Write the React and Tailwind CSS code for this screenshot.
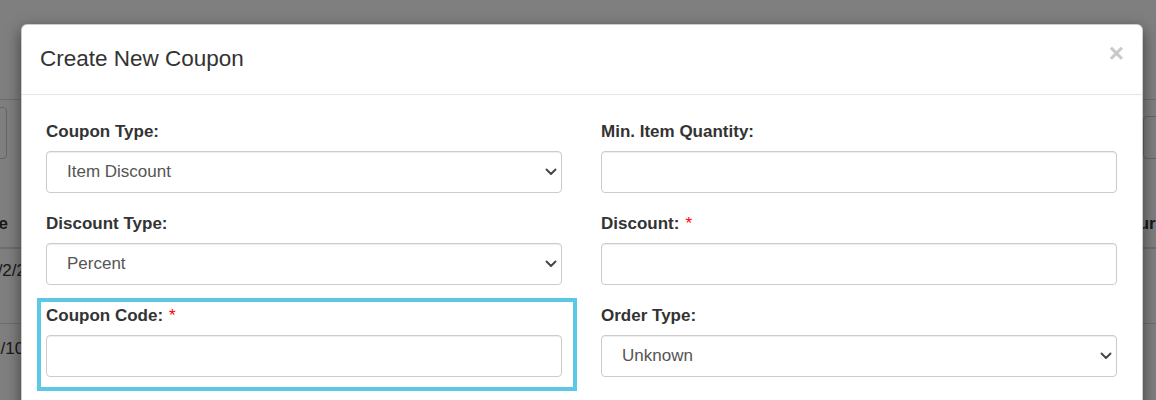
import React from 'react';

const FONT = { fontFamily: '"Liberation Sans", Arial, sans-serif' };

const Chevron = () => (
  <svg
    className="pointer-events-none absolute right-[5px] top-1/2 -translate-y-1/2"
    width="12"
    height="8"
    viewBox="0 0 12 8"
    fill="none"
  >
    <path d="M1.5 1.5 L6 6 L10.5 1.5" stroke="#444" strokeWidth="1.9" strokeLinecap="round" strokeLinejoin="round" />
  </svg>
);

const Label = ({ text, required }) => (
  <label className="block h-[22px] leading-[22px] mb-[8px] text-[17px] font-bold text-[#333]">
    {text}
    {required && <span className="ml-[6px] font-normal text-[#f00]">*</span>}
  </label>
);

const SelectField = ({ value }) => (
  <div className="relative h-[42px]">
    <select
      defaultValue={value}
      className="appearance-none w-full h-full pl-[20px] pr-8 bg-white border border-[#ccc] rounded-[4px] text-[17px] text-[#555] shadow-[inset_0_1px_1px_rgba(0,0,0,0.075)] outline-none"
    >
      <option>{value}</option>
    </select>
    <Chevron />
  </div>
);

const TextField = () => (
  <input
    type="text"
    className="block w-full h-[42px] px-3 bg-white border border-[#ccc] rounded-[4px] text-[17px] text-[#555] shadow-[inset_0_1px_1px_rgba(0,0,0,0.075)] outline-none"
  />
);

const Group = ({ label, required, children, highlight }) => (
  <div className="relative mb-[20px]">
    {highlight && (
      <div className="pointer-events-none absolute -left-[9px] -right-[15px] -top-[7px] -bottom-[14px] border-[4px] border-[#5bc8e6]" />
    )}
    <Label text={label} required={required} />
    {children}
  </div>
);

// pagina de fondo, tapada por el backdrop
const BackgroundPage = () => (
  <div className="w-full h-[400px] overflow-hidden bg-white text-[17px] text-[#333]">
    <div className="h-[100px] border-b border-[#ddd]" />
    <div className="h-[59px] flex justify-between items-end">
      <div className="-ml-[20px] w-[27px] h-[52px] border border-[#ccc] rounded-[4px]" />
      <div className="-mr-[20px] w-[33px] h-[43px] border border-[#ccc] rounded-[4px]" />
    </div>
    <div className="h-[90px] flex justify-between items-center pt-[42px] border-b-2 border-[#ddd] font-bold">
      <span className="-ml-[29px]">Date</span>
      <span className="mr-[-45px]">Currency</span>
    </div>
    <div className="h-[75px] flex items-center pb-[30px] border-b border-[#ddd]">
      <span className="-ml-[20px]">11/2/2024</span>
    </div>
    <div className="h-[75px] flex items-start pt-[12px]">
      <span className="-ml-[9px]">1/10/2024</span>
    </div>
  </div>
);

export default function App() {
  return (
    <div className="relative w-[1156px] h-[400px] overflow-hidden" style={FONT}>
      <BackgroundPage />
      <div className="absolute inset-0 bg-black/50" />

      <div className="absolute left-[21px] top-[24px] w-[1122px] h-[420px] bg-white rounded-[6px] border border-black/20 shadow-[0_5px_15px_rgba(0,0,0,0.5)]">
        {/* header */}
        <div className="h-[70px] flex items-center justify-between pl-[18px] pr-[18px] border-b border-[#e5e5e5]">
          <h4 className="text-[22.5px] text-[#333] leading-none">Create New Coupon</h4>
          <button className="-mt-[14px] text-[26px] font-bold leading-none text-[#c8c8c8]">×</button>
        </div>

        {/* body */}
        <div className="grid grid-cols-2 gap-x-[39px] pl-[24px] pr-[25px] pt-[26px]">
          <div>
            <Group label="Coupon Type:">
              <SelectField value="Item Discount" />
            </Group>
            <Group label="Discount Type:">
              <SelectField value="Percent" />
            </Group>
            <Group label="Coupon Code:" required highlight>
              <TextField />
            </Group>
          </div>
          <div>
            <Group label="Min. Item Quantity:">
              <TextField />
            </Group>
            <Group label="Discount:" required>
              <TextField />
            </Group>
            <Group label="Order Type:">
              <SelectField value="Unknown" />
            </Group>
          </div>
        </div>
      </div>
    </div>
  );
}
